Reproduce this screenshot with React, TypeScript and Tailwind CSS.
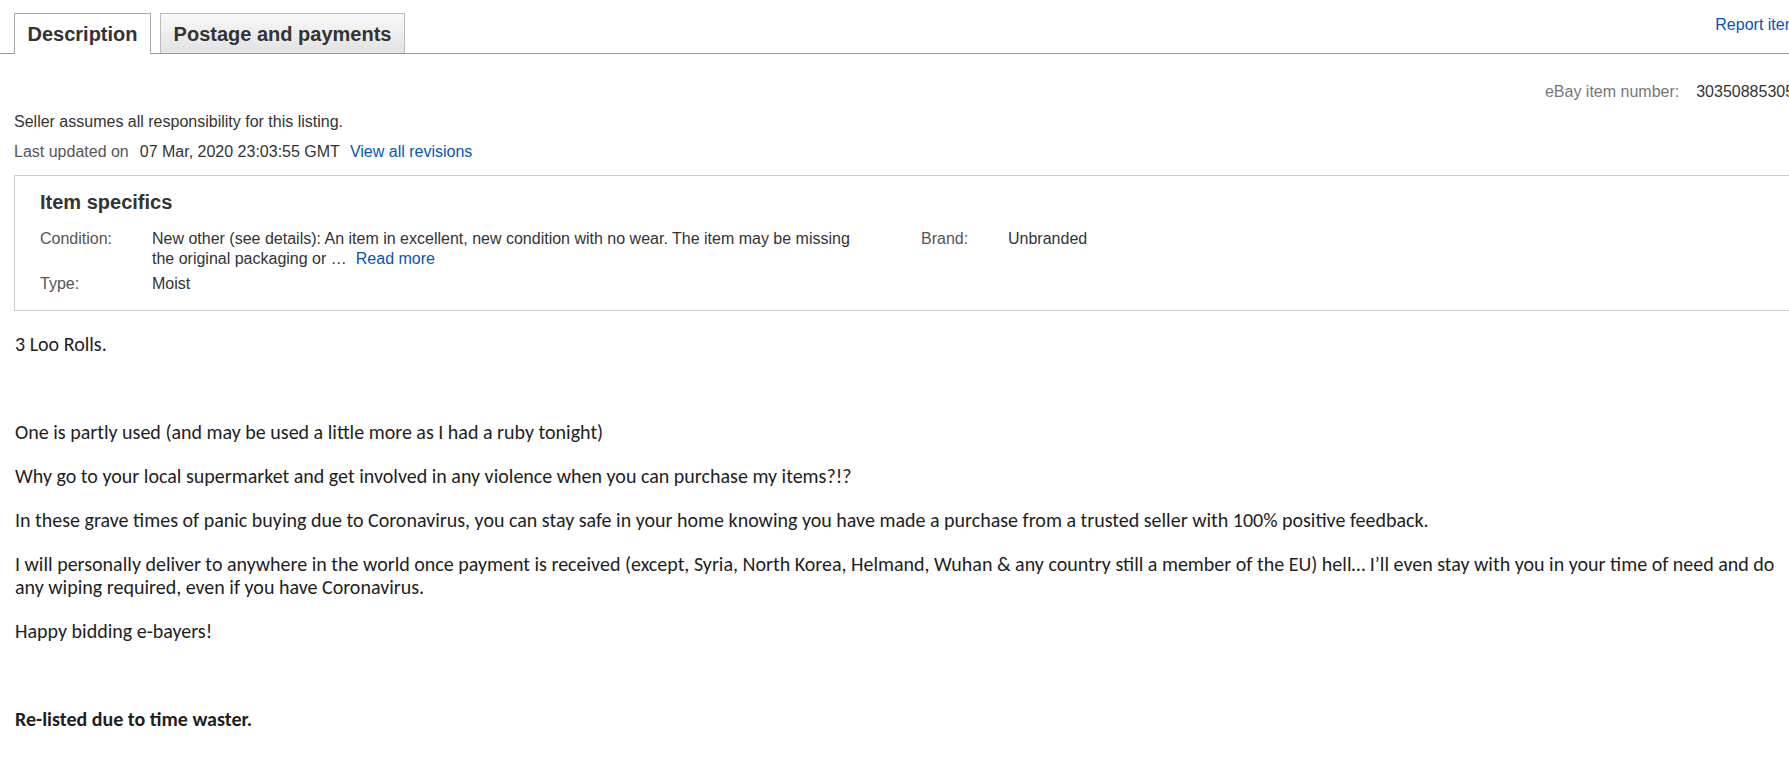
import React from "react";

export default function App() {
  return (
    <div className="w-[1789px] h-[775px] overflow-hidden bg-white font-['Liberation_Sans',Arial,sans-serif]">
      <div className="w-[1800px]">
        {/* Tabs */}
        <div className="flex items-end h-[54px] border-b border-[#999] pl-[14px]">
          <div className="w-[137px] h-[41px] -mb-px flex items-center justify-center border border-b-0 border-[#aaa] bg-white text-[20px] leading-[24px] font-bold text-[#333]">
            Description
          </div>
          <div className="ml-[9px] w-[245px] h-[40px] flex items-center justify-center border border-b-0 border-[#bbb] bg-linear-to-b from-[#f9f9f9] to-[#e2e2e2] text-[20px] leading-[24px] font-bold text-[#333]">
            Postage and payments
          </div>
          <a className="ml-auto self-start mt-[16px] mr-[2px] text-[16px] leading-[18px] text-[#0654ba]">
            Report item
          </a>
        </div>

        {/* Meta */}
        <div className="pl-[14px]">
          <div className="mt-[29px] flex justify-end text-[16px] leading-[18px]">
            <span className="text-[#777]">eBay item number:</span>
            <span className="ml-[17px] -mr-[3px] text-[#333]">303508853053</span>
          </div>
          <div className="mt-[12px] text-[16px] leading-[18px] text-[#333]">
            Seller assumes all responsibility for this listing.
          </div>
          <div className="mt-[12px] flex text-[16px] leading-[18px]">
            <span className="text-[#555]">Last updated on</span>
            <span className="ml-[11px] text-[#333]">07 Mar, 2020 23:03:55 GMT</span>
            <a className="ml-[10px] text-[#0654ba]">View all revisions</a>
          </div>

          {/* Item specifics */}
          <div className="mt-[14px] -mr-[20px] border border-[#ccc] pl-[25px] pt-[14px] pb-[16px]">
            <h2 className="text-[20px] leading-[24px] font-bold text-[#333]">Item specifics</h2>
            <div className="mt-[15px] flex text-[16px] leading-[20px]">
              <div className="w-[112px] text-[#555]">Condition:</div>
              <div className="w-[720px] text-[#333]">
                New other (see details): An item in excellent, new condition with no wear. The item may be missing the original packaging or …
                <a className="ml-[9px] text-[#0654ba]">Read more</a>
              </div>
              <div className="ml-[49px] w-[87px] text-[#555]">Brand:</div>
              <div className="text-[#333]">Unbranded</div>
            </div>
            <div className="mt-[5px] flex text-[16px] leading-[20px]">
              <div className="w-[112px] text-[#555]">Type:</div>
              <div className="text-[#333]">Moist</div>
            </div>
          </div>

          {/* Description */}
          <div className="mt-[22px] pl-px pr-[14px] font-['Calibri','Carlito',Lato,sans-serif] text-[20px] leading-[23px] text-[#1e1e1e]">
            <p className="mb-[21px]">3 Loo Rolls.</p>
            <p className="mb-[21px]">&nbsp;</p>
            <p className="mb-[21px]">One is partly used (and may be used a little more as I had a ruby tonight)</p>
            <p className="mb-[21px]">Why go to your local supermarket and get involved in any violence when you can purchase my items?!?</p>
            <p className="mb-[21px]">
              In these grave times of panic buying due to Coronavirus, you can stay safe in your home knowing you have made a purchase from a trusted seller with 100% positive feedback.
            </p>
            <p className="mb-[21px]">
              I will personally deliver to anywhere in the world once payment is received (except, Syria, North Korea, Helmand, Wuhan &amp; any country still a member of the EU) hell… I’ll even stay with you in your time of need and do any wiping required, even if you have Coronavirus.
            </p>
            <p className="mb-[21px]">Happy bidding e-bayers!</p>
            <p className="mb-[21px]">&nbsp;</p>
            <p className="mb-[21px] font-bold">Re-listed due to time waster.</p>
          </div>
        </div>
      </div>
    </div>
  );
}
